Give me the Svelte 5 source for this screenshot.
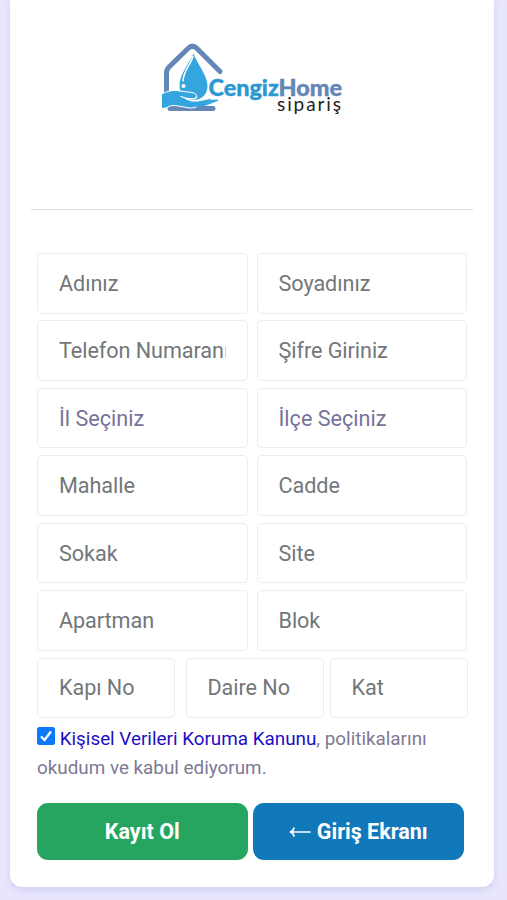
<script>
  const fields = [
    { name: "ad", label: "Adınız" },
    { name: "soyad", label: "Soyadınız" },
    { name: "telefon", label: "Telefon Numaranız" },
    { name: "sifre", label: "Şifre Giriniz", type: "password" },
    { name: "il", label: "İl Seçiniz", select: true },
    { name: "ilce", label: "İlçe Seçiniz", select: true },
    { name: "mahalle", label: "Mahalle" },
    { name: "cadde", label: "Cadde" },
    { name: "sokak", label: "Sokak" },
    { name: "site", label: "Site" },
    { name: "apartman", label: "Apartman" },
    { name: "blok", label: "Blok" },
  ];

  const doorFields = [
    { name: "kapi", label: "Kapı No" },
    { name: "daire", label: "Daire No" },
    { name: "kat", label: "Kat" },
  ];

  let accepted = $state(true);
</script>

<div class="page">
  <form class="card" onsubmit={(e) => e.preventDefault()}>
    <header>
      <svg class="logo" viewBox="0 0 190 80" role="img" aria-label="CengizHome sipariş">
        <path
          d="M9.500 60V34Q9.500 30.500 12 28L31 9.500Q35.500 5 40 9.500L63 32.500"
          fill="none"
          stroke="#6487b8"
          stroke-width="5"
          stroke-linecap="round"
          stroke-linejoin="round"
        />
        <path d="M13 69.500H56" stroke="#6487b8" stroke-width="5" stroke-linecap="round" />
        <path
          d="M36.500 14.500C34 22 22.500 35 22.500 46C22.500 56 29 61 36 61C45 61 50.500 55 50.500 47C50.500 36 39.500 24 36.500 14.500Z"
          fill="#35a5df"
        />
        <path d="M36 17.500C33.500 26 26.500 31 26 42" fill="none" stroke="#fff" stroke-width="1.500" stroke-linecap="round" />
        <circle cx="26.500" cy="47" r="2" fill="#fff" />
        <path
          d="M4.500 55Q13 51 19 51.500L35 53.500Q40 54.500 39.500 58Q38.500 60.500 35 60L28 59.500Q34 63 41 62L53 59.500Q56 59.500 55 61L38 68.500Q34 70 27 68L18 66.500Q13 66 9 69L4.500 69.500Z"
          fill="#35a5df"
          stroke="#fff"
          stroke-width="1"
        />
        <path d="M24 57.500Q30 60 35 60Q40 60 39.500 57" fill="none" stroke="#fff" stroke-width="1.200" stroke-linecap="round" />
        <path d="M41 65L52 61.500Q57 60.500 60.500 60.500Q62.500 60.500 60.500 62L49 66.500L39 68.500Z" fill="#35a5df" />
        <text class="brand" x="51.500" y="57" textLength="133.500" lengthAdjust="spacingAndGlyphs"
          ><tspan fill="#2c98d3" stroke="#2c98d3">Cengiz</tspan><tspan fill="#6487b8" stroke="#6487b8">Home</tspan></text
        >
        <text class="sub" x="120" y="71.500" textLength="64">sipariş</text>
      </svg>
    </header>

    <div class="fields">
      {#each fields as field}
        {#if field.select}
          <select name={field.name} aria-label={field.label}>
            <option>{field.label}</option>
          </select>
        {:else}
          <input type={field.type ?? "text"} name={field.name} placeholder={field.label} />
        {/if}
      {/each}
    </div>

    <div class="doors">
      {#each doorFields as field}
        <input type="text" name={field.name} placeholder={field.label} />
      {/each}
    </div>

    <div class="terms">
      <label class="check">
        <input type="checkbox" bind:checked={accepted} />
        <svg viewBox="0 0 18 18" class:on={accepted}>
          <rect width="18" height="18" rx="2.500" />
          <path d="M4 9.500L7.500 13L14 4.500" />
        </svg>
      </label>
      <a href="#kvkk">Kişisel Verileri Koruma Kanunu</a>, politikalarını<br />
      okudum ve kabul ediyorum.
    </div>

    <div class="actions">
      <button class="register" type="submit">Kayıt Ol</button>
      <button class="login" type="button">
        <svg viewBox="0 0 22 12">
          <path d="M21 6H1.500M5 2Q4 5.500 1 6Q4 6.500 5 10" />
        </svg>
        Giriş Ekranı
      </button>
    </div>
  </form>
</div>

<style>
  :global(body) {
    background: #e7e6fd;
  }

  .page {
    box-sizing: border-box;
    height: 900px;
    padding: 0 13px 13px 10px;
    overflow: hidden;
    font-family: Roboto, "Liberation Sans", sans-serif;
  }

  .card {
    box-sizing: border-box;
    height: 887px;
    padding: 0 27px;
    background: #fff;
    border-radius: 0 0 12px 12px;
    box-shadow: 0 3px 6px rgba(105, 85, 180, 0.16);
  }

  header {
    box-sizing: border-box;
    height: 210px;
    margin: 0 -6px;
    padding: 39px 0 0 126px;
    border-bottom: 1.5px solid #dcdcde;
  }

  .logo {
    display: block;
    width: 190px;
    height: 80px;
  }

  .brand {
    font-family: Lato, sans-serif;
    font-size: 22px;
    font-weight: 900;
    stroke-width: 0.4px;
  }

  .sub {
    font-family: Lato, sans-serif;
    font-size: 19px;
    fill: #222;
  }

  .fields {
    display: grid;
    grid-template-columns: 1fr 1fr;
    grid-auto-rows: 60.5px;
    gap: 6.95px 9px;
    padding-top: 43px;
  }

  .doors {
    display: grid;
    grid-template-columns: 138px 138px 138px;
    grid-template-rows: 60.5px;
    justify-content: start;
    column-gap: 10.5px;
    margin-top: 6.95px;
  }

  .doors input:last-child {
    margin-left: -4.5px;
  }

  .fields input,
  .doors input,
  select {
    box-sizing: border-box;
    width: 100%;
    min-width: 0;
    margin: 0;
    padding: 0 20.5px;
    border: 1.5px solid #ececee;
    border-radius: 5px;
    background: #fff;
    font-family: inherit;
    font-size: 21.6px;
    color: #727083;
    outline: none;
    appearance: none;
  }

  .fields input,
  .doors input {
    letter-spacing: -0.05px;
    padding-left: 21px;
  }

  select {
    padding-left: 21px;
    color: #77739a;
  }

  input::placeholder {
    color: #72777a;
    opacity: 1;
  }

  .terms {
    margin-top: 7px;
    font-size: 18.85px;
    line-height: 28.5px;
    color: #7d7994;
    white-space: nowrap;
  }

  .check {
    display: inline-block;
    width: 18px;
    height: 18px;
  }

  .check input {
    display: none;
  }

  .check svg {
    display: block;
    width: 18px;
    height: 18px;
  }

  .check rect {
    fill: #fff;
    stroke: #767676;
  }

  .check path {
    fill: none;
    stroke: #fff;
    stroke-width: 2.4;
  }

  .check .on rect {
    fill: #0a78fa;
    stroke: none;
  }

  a {
    color: #1d0fc4;
    text-decoration: none;
  }

  .actions {
    display: flex;
    gap: 5.5px;
    margin-top: 21px;
  }

  button {
    display: flex;
    align-items: center;
    justify-content: center;
    gap: 6px;
    width: 210.5px;
    height: 57px;
    padding: 0;
    border: 0;
    border-radius: 11px;
    color: #fff;
    font-family: inherit;
    font-size: 21.5px;
    font-weight: 700;
  }

  .register {
    background: #26a561;
  }

  .login {
    background: #1178b9;
  }

  .login svg {
    width: 22px;
    height: 12px;
    fill: none;
    stroke: #fff;
    stroke-width: 1.7;
    stroke-linecap: round;
  }
</style>
